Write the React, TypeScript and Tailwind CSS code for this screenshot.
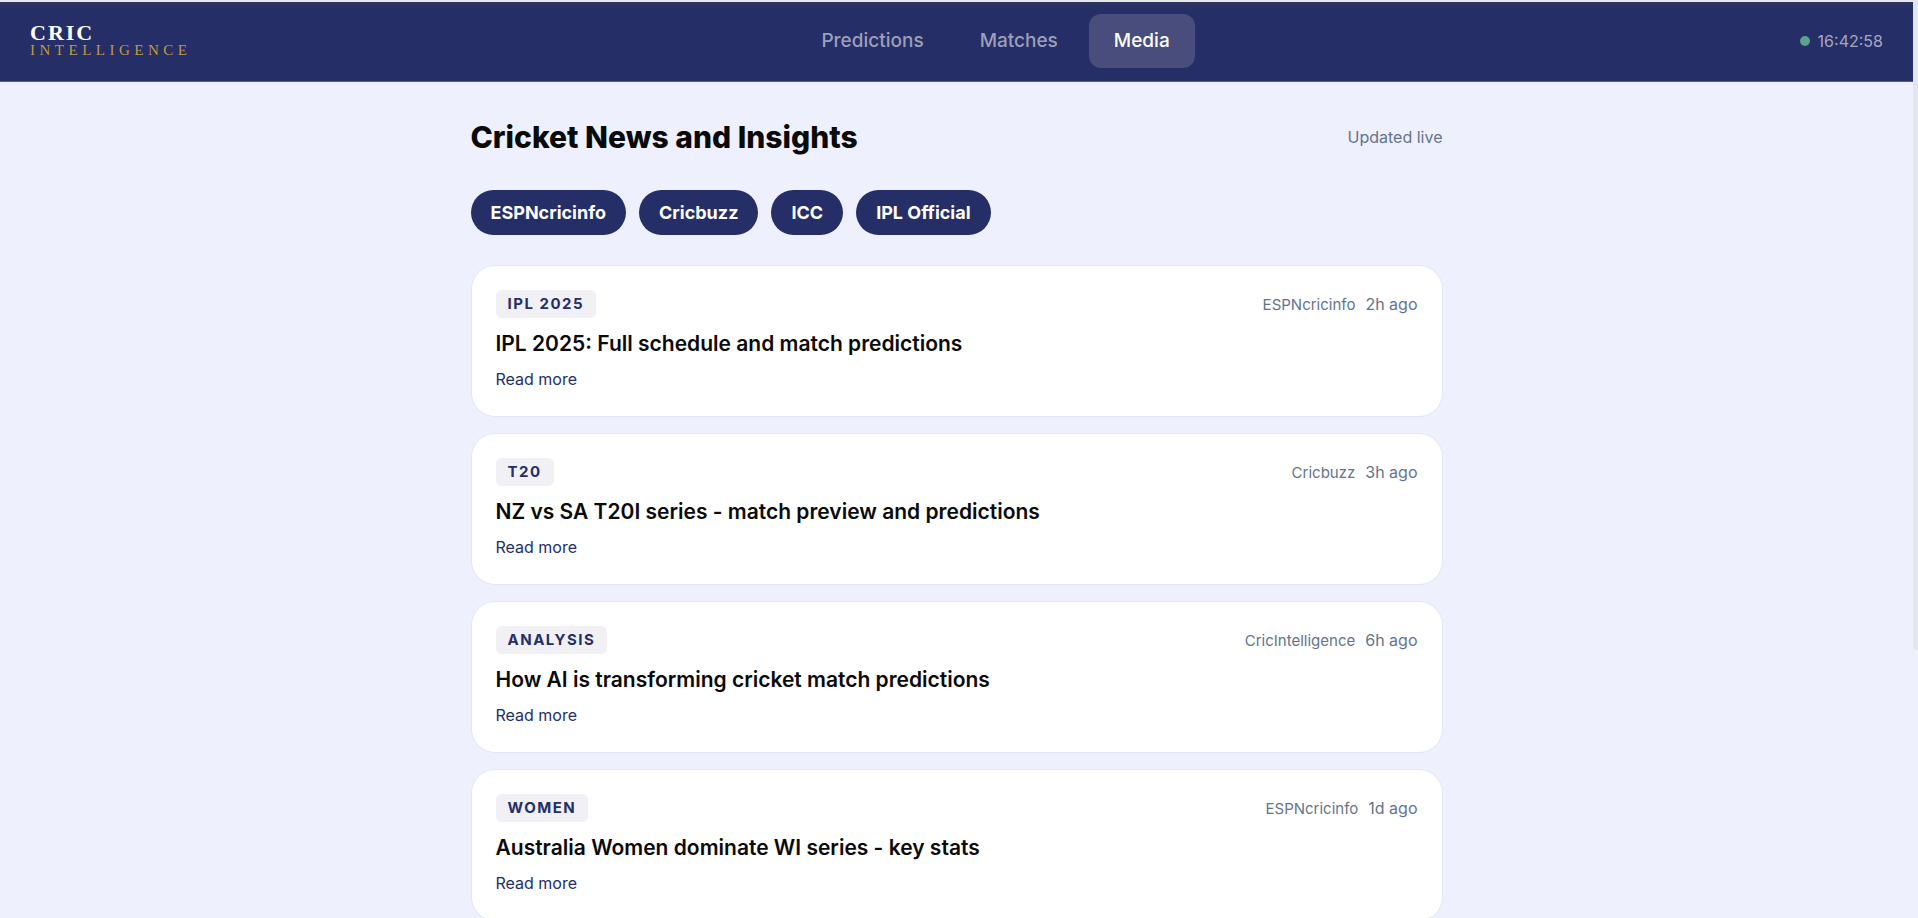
const navItems = ["Predictions", "Matches", "Media"];

const sources = ["ESPNcricinfo", "Cricbuzz", "ICC", "IPL Official"];

const articles = [
  {
    tag: "IPL 2025",
    title: "IPL 2025: Full schedule and match predictions",
    source: "ESPNcricinfo",
    time: "2h ago",
  },
  {
    tag: "T20",
    title: "NZ vs SA T20I series - match preview and predictions",
    source: "Cricbuzz",
    time: "3h ago",
  },
  {
    tag: "Analysis",
    title: "How AI is transforming cricket match predictions",
    source: "CricIntelligence",
    time: "6h ago",
  },
  {
    tag: "Women",
    title: "Australia Women dominate WI series - key stats",
    source: "ESPNcricinfo",
    time: "1d ago",
  },
];

function Navbar() {
  return (
    <header className="flex h-20 items-center justify-between border-b border-[#5257a5] bg-[#252e66] bg-linear-to-b from-[#2e3560] from-0% to-[#252e66] to-10% px-[30px] pb-px">
      {/* Logo */}
      <a
        href="#"
        className="flex flex-col font-['Liberation_Serif',serif] uppercase"
      >
        <span className="text-[22px] leading-[18px] font-bold tracking-[2px] text-white">
          Cric
        </span>
        <span className="text-[15px] leading-[16px] tracking-[0.3em] text-[#c19a3d]">
          Intelligence
        </span>
      </a>

      {/* Tabs */}
      <nav className="flex gap-[6px]">
        {navItems.map((item) => (
          <button
            key={item}
            className={
              item === "Media"
                ? "h-[54px] cursor-pointer rounded-xl bg-[#484d7c] px-[25px] text-[19px] font-medium text-white"
                : "h-[54px] cursor-pointer rounded-xl px-[25px] text-[19px] font-medium text-[#9c9fb9]"
            }
          >
            {item}
          </button>
        ))}
      </nav>

      {/* Clock */}
      <div className="flex items-center gap-2 text-[16px] text-[#a5a8c1]">
        <span className="size-[10px] rounded-full bg-[#59a28d]"></span>
        <span>16:42:58</span>
      </div>
    </header>
  );
}

function ArticleCard({ article }: { article: (typeof articles)[number] }) {
  return (
    <article className="rounded-3xl border border-[#e2e8f0] bg-white p-6">
      <div className="flex h-7 items-center justify-between">
        <span className="rounded-md bg-[#f0f0f5] px-3 text-[15px] leading-[28px] font-bold tracking-widest text-[#252e66] uppercase">
          {article.tag}
        </span>
        <div className="flex items-baseline gap-[10px] leading-[28px] text-[#64748b]">
          <span className="text-[15px]">{article.source}</span>
          <span className="text-[16px]">{article.time}</span>
        </div>
      </div>
      <h2 className="mt-3 text-[21px] leading-[28px] font-semibold text-[#0a0a0a]">
        {article.title}
      </h2>
      <a
        href="#"
        className="mt-2 block w-fit text-[16px] leading-[26px] text-[#252e66]"
      >
        Read more
      </a>
    </article>
  );
}

export default function App() {
  return (
    <div className="h-screen overflow-hidden border-t-2 border-[#e4e7ec] bg-[#eef0fe] pr-[5px] font-['Inter',sans-serif]">
      <Navbar />

      <main className="mx-auto max-w-[972px] pt-9">
        <div className="flex items-center justify-between">
          <h1 className="text-[30px] leading-[38px] font-extrabold text-[#0a0a0a]">
            Cricket News and Insights
          </h1>
          <span className="text-[16px] text-[#64748b]">Updated live</span>
        </div>

        {/* Source links */}
        <div className="mt-[34px] flex gap-[13px]">
          {sources.map((source) => (
            <a
              key={source}
              href="#"
              className="rounded-full bg-[#252e66] px-5 text-[18px] leading-[45px] font-bold text-white"
            >
              {source}
            </a>
          ))}
        </div>

        <div className="mt-[30px] flex flex-col gap-4">
          {articles.map((article) => (
            <ArticleCard key={article.title} article={article} />
          ))}
        </div>
      </main>

      {/* Scroll thumb */}
      <div className="fixed top-[2px] right-0 h-[648px] w-[5px] rounded-b-sm bg-[#e2e6ed]"></div>
    </div>
  );
}
